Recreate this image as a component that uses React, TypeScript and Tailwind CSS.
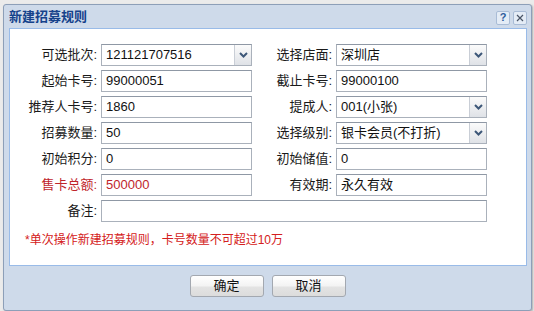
const font = "font-['Liberation_Sans','Noto_Sans_CJK_SC',sans-serif]"

function Chevron() {
  return (
    <svg width="9" height="6" viewBox="0 0 9 6">
      <polyline points="1,1 4.5,4.5 8,1" fill="none" stroke="#3d5778" strokeWidth="2" />
    </svg>
  )
}

function Field({ value, select, red, wide }: { value: string; select?: boolean; red?: boolean; wide?: boolean }) {
  return (
    <div
      className={`ml-[4px] flex h-[22px] items-stretch border border-[#aab1bb] border-t-[#8f98a5] bg-white ${wide ? 'w-[386px]' : 'w-[151px]'}`}
    >
      <div className={`flex flex-1 items-center pl-[4px] text-[13px] ${red ? 'text-[#c0252b]' : 'text-[#111]'}`}>{value}</div>
      {select && (
        <div className="flex w-[17px] items-center justify-center border-l border-[#c9ced6] bg-linear-to-b from-[#fbfbfb] to-[#dfe2e7]">
          <Chevron />
        </div>
      )}
    </div>
  )
}

function Label({ text, w, red }: { text: string; w: string; red?: boolean }) {
  return <div className={`${w} text-right text-[13px] ${red ? 'text-[#c0252b]' : 'text-[#1a1a1a]'}`}>{text}</div>
}

const rows = [
  { l: '可选批次:', lv: '121121707516', ls: true, r: '选择店面:', rv: '深圳店', rs: true },
  { l: '起始卡号:', lv: '99000051', r: '截止卡号:', rv: '99000100' },
  { l: '推荐人卡号:', lv: '1860', r: '提成人:', rv: '001(小张)', rs: true },
  { l: '招募数量:', lv: '50', r: '选择级别:', rv: '银卡会员(不打折)', rs: true },
  { l: '初始积分:', lv: '0', r: '初始储值:', rv: '0' },
  { l: '售卡总额:', lv: '500000', red: true, r: '有效期:', rv: '永久有效' },
]

export default function App() {
  return (
    <div className={`h-[311px] w-[534px] bg-[#ebebeb] pl-[3px] pt-[4px] ${font}`}>
      <div className="flex h-[307px] w-[529px] flex-col rounded-[3px] border border-[#8d9fb8] bg-[#cedaea] shadow-[1px_1px_2px_rgba(0,0,0,0.25)]">
        <div className="flex h-[23px] items-center justify-between pl-[5px] pr-[4px]">
          <div className="pt-[1px] text-[13px] font-bold text-[#15428b]">新建招募规则</div>
          <div className="flex gap-[3px] pt-[2px]">
            <div className="flex h-[14px] w-[14px] items-center justify-center rounded-[2px] border border-[#a9bcd6] bg-[#e4ecf6] text-[11px] font-bold leading-none text-[#2d5c9c]">
              ?
            </div>
            <div className="flex h-[14px] w-[14px] items-center justify-center rounded-[2px] border border-[#a9bcd6] bg-[#e4ecf6]">
              <svg width="8" height="8" viewBox="0 0 8 8">
                <path d="M1 1 L7 7 M7 1 L1 7" stroke="#4a5566" strokeWidth="1.2" />
              </svg>
            </div>
          </div>
        </div>

        <div className="ml-[5px] h-[238px] w-[518px] border border-[#99bbe8] bg-white">
          <div className="flex flex-col gap-[4px] pt-[15px]">
            {rows.map((row) => (
              <div key={row.l} className="flex items-center">
                <Label text={row.l} w="w-[87px]" red={row.red} />
                <Field value={row.lv} select={row.ls} red={row.red} />
                <Label text={row.r} w="w-[80px]" />
                <Field value={row.rv} select={row.rs} />
              </div>
            ))}
            <div className="flex items-center">
              <Label text="备注:" w="w-[87px]" />
              <Field value="" wide />
            </div>
          </div>
          <div className="mt-[10px] pl-[15px] text-[12px] leading-[16px] text-[#d42020]">
            *单次操作新建招募规则，卡号数量不可超过10万
          </div>
        </div>

        <div className="flex justify-center gap-[8px] pt-[9px]">
          {['确定', '取消'].map((t) => (
            <div
              key={t}
              className="flex h-[22px] w-[74px] items-center justify-center rounded-[3px] border border-[#a3a8b0] bg-[linear-gradient(#ffffff,#f3f3f3_50%,#e3e3e3_55%,#dcdcdc)] text-[13px] text-[#111]"
            >
              {t}
            </div>
          ))}
        </div>
      </div>
    </div>
  )
}
